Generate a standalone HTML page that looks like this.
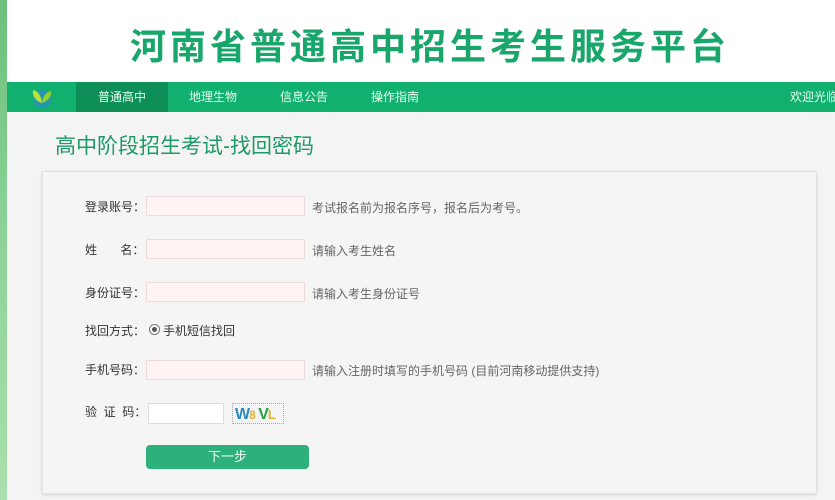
<!DOCTYPE html>
<html><head><meta charset="utf-8"><style>
*{margin:0;padding:0;box-sizing:border-box}
body{width:835px;height:500px;overflow:hidden;background:#f4f4f4;font-family:"Liberation Sans","Noto Sans CJK SC",sans-serif;position:relative}
.strip{position:absolute;left:0;top:0;width:7px;height:500px;background:linear-gradient(#6cc07a,#8fd39a 50%,#a9dfae)}
.hdr{position:absolute;left:7px;top:0;right:0;height:82px;background:#fff}
.hdr h1{position:absolute;left:123px;top:18px;font-size:36px;font-weight:bold;color:#18a66a;letter-spacing:4px;white-space:nowrap;font-family:"Noto Sans CJK SC",sans-serif}
.nav{position:absolute;left:7px;top:82px;right:0;height:30px;background:#12b06e;overflow:hidden}
.nav span{position:absolute;top:0;line-height:30px;color:#e8fff2;font-size:12px;white-space:nowrap}
.nav .act{left:69px;width:92px;background:#0e8f58;text-align:center}
.title{position:absolute;left:55px;top:130px;font-size:21px;color:#1d9a66}
.panel{position:absolute;left:42px;top:171px;width:775px;height:323px;background:#f5f5f5;border:1px solid #e2e2e2;box-shadow:0 1px 3px rgba(0,0,0,.12)}
.lbl{position:absolute;left:85px;font-size:12px;color:#333}
.inp{position:absolute;left:146px;width:159px;height:20px;background:#fff3f3;border:1px solid #ecdcdc}
.hint{position:absolute;left:312px;font-size:12px;color:#666}
.btn{position:absolute;left:146px;top:445px;width:163px;height:24px;background:#2eb07a;border-radius:4px;color:#eafff3;text-align:center;line-height:24px;font-size:13px}
</style></head><body>
<div class="strip"></div>
<div class="hdr"><h1>河南省普通高中招生考生服务平台</h1></div>
<div class="nav">
<svg style="position:absolute;left:22px;top:3px" width="26" height="24" viewBox="0 0 26 24"><circle cx="13" cy="14" r="9" fill="#2a8fc0" opacity=".8"/><path d="M13 18 C6 16 3 10 4 5 C9 6 12 10 13 18Z" fill="#b8e23a"/><path d="M13 18 C19 16 23 11 22 6 C17 7 14 11 13 18Z" fill="#8fd12f"/></svg>
<span class="act">普通高中</span>
<span style="left:182px">地理生物</span>
<span style="left:273px">信息公告</span>
<span style="left:364px">操作指南</span>
<span style="left:783px">欢迎光临</span>
</div>
<div class="title">高中阶段招生考试-找回密码</div>
<div class="panel"></div>
<div class="lbl" style="top:198px">登录账号：</div><div class="inp" style="top:196px"></div><div class="hint" style="top:199px">考试报名前为报名序号，报名后为考号。</div>
<div class="lbl" style="top:241px">姓&nbsp;&nbsp;&nbsp;&nbsp;&nbsp;&nbsp;&nbsp;名：</div><div class="inp" style="top:239px"></div><div class="hint" style="top:242px">请输入考生姓名</div>
<div class="lbl" style="top:284px">身份证号：</div><div class="inp" style="top:282px"></div><div class="hint" style="top:285px">请输入考生身份证号</div>
<div class="lbl" style="top:322px">找回方式：</div>
<div style="position:absolute;left:149px;top:324px;width:11px;height:11px;border:1px solid #777;border-radius:50%;background:#fff"><div style="margin:2px;width:5px;height:5px;border-radius:50%;background:#555"></div></div>
<div class="lbl" style="left:163px;top:322px">手机短信找回</div>
<div class="lbl" style="top:361px">手机号码：</div><div class="inp" style="top:360px"></div><div class="hint" style="top:362px">请输入注册时填写的手机号码 (目前河南移动提供支持)</div>
<div class="lbl" style="top:403px">验&nbsp;&nbsp;证&nbsp;&nbsp;码：</div>
<div style="position:absolute;left:148px;top:403px;width:76px;height:21px;background:#fff;border:1px solid #ddd"></div>
<div style="position:absolute;left:232px;top:403px;width:52px;height:21px;background:#f2f4f6;border:1px dotted #9ab;font-weight:bold;font-size:16px;line-height:21px;padding-left:2px;letter-spacing:-1px"><span style="color:#2a8ab8">W</span><span style="color:#e6b030;font-size:12px">8</span><span style="color:#999"> </span><span style="color:#27a040">V</span><span style="color:#e6b030;font-size:13px">L</span></div>
<div class="btn">下一步</div>
</body></html>
